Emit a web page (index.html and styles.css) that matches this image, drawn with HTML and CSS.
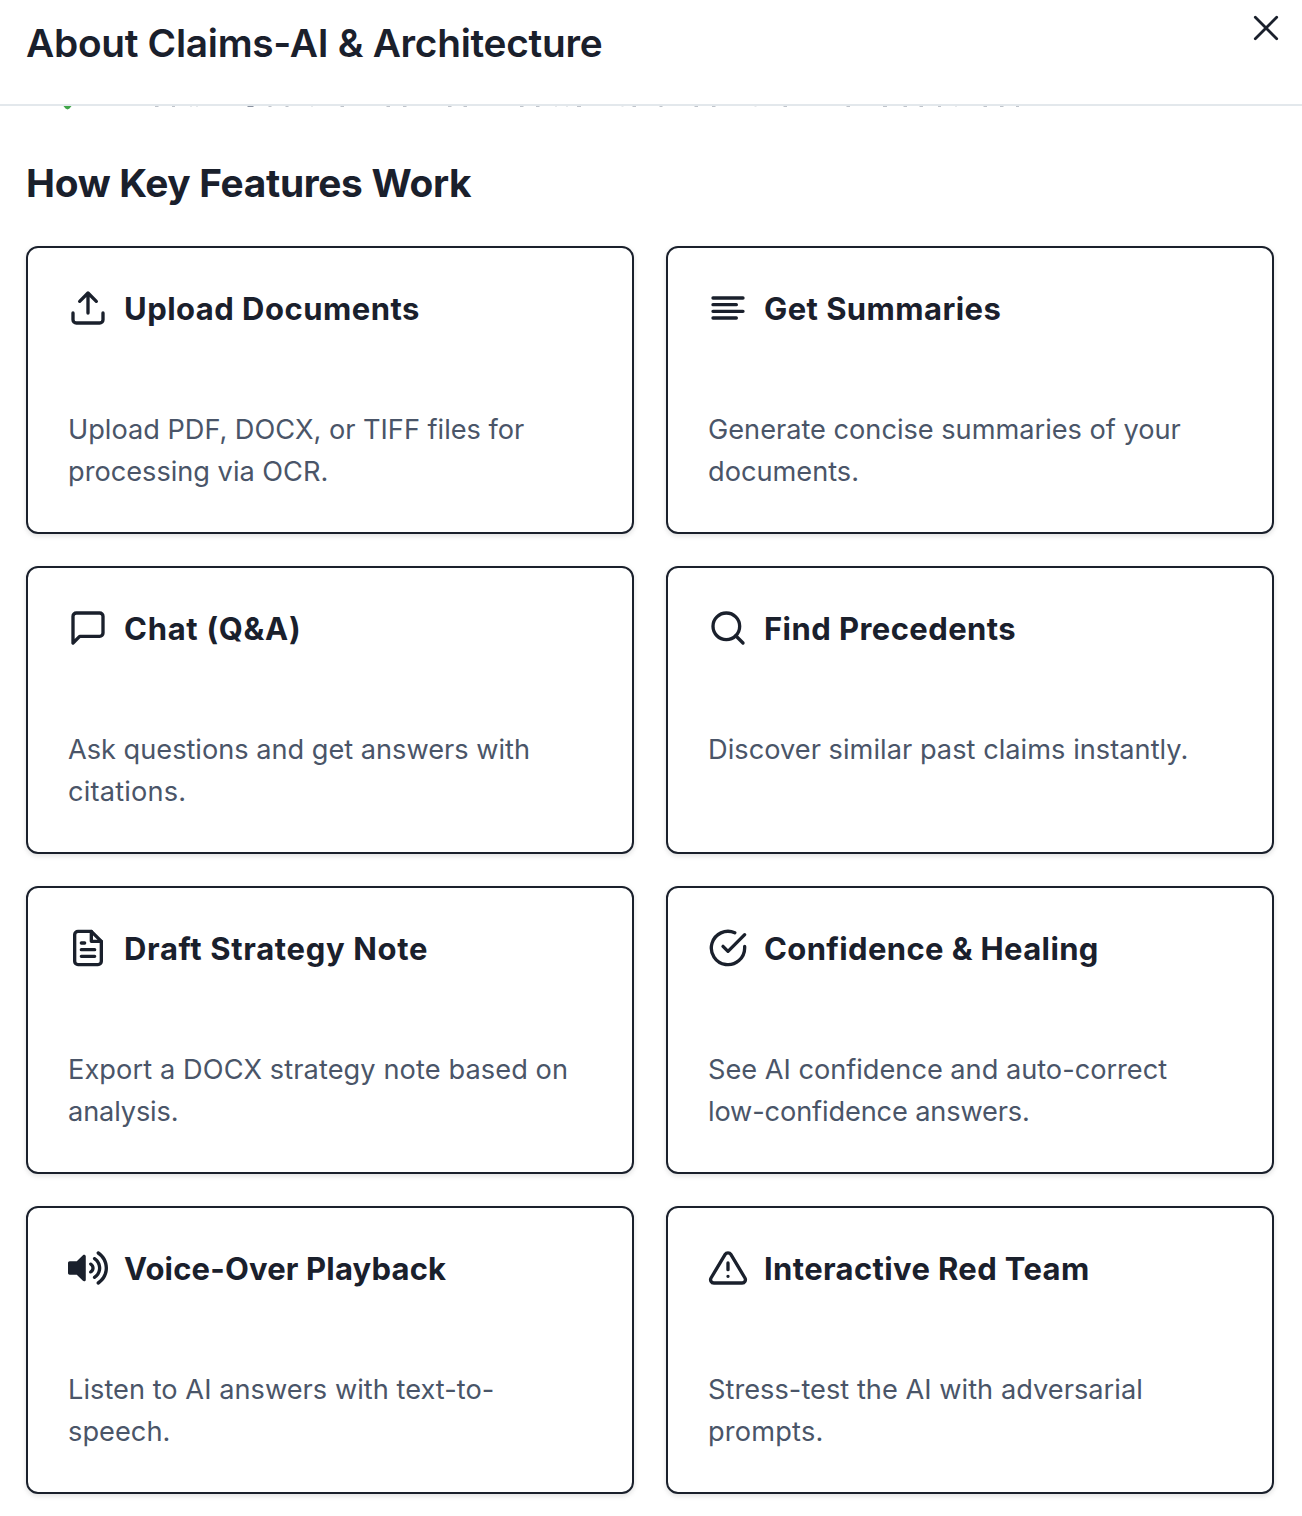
FILE: index.html
```
<!DOCTYPE html>
<html lang="en">
<head>
<meta charset="utf-8">
<title>About Claims-AI &amp; Architecture</title>
<link rel="stylesheet" href="styles.css">
</head>
<body>
<header class="header">
  <h1 class="title">About Claims-AI &amp; Architecture</h1>
  <button class="close" aria-label="Close"><svg viewBox="0 0 24 24" width="24" height="24"><path d="M1.3 1.3 22.7 22.7M22.7 1.3 1.3 22.7"/></svg></button>
</header>
<main class="content">
  <!-- bottom edge of the list row scrolled under the header -->
  <svg class="scrolled-row" width="1250" height="4" viewBox="26 106 1250 4" aria-hidden="true">
    <path fill="#3fa548" d="M63.5 106h8l-2 2.4-2 1.1-2-1.1z"/>
    <path stroke="#bfc4cb" stroke-width="1" d="M155 106.5h3.500M172 106.500h3M268.500 106.500h3M285.500 106.500h3M340.500 106.500h3.500M386.500 106.500h3.500M403 106.500h3.500M448 106.500h3.500M463.500 106.500h3.500M520 106.500h3.500M536 106.500h3.500M577 106.500h4M632.500 106.500h3.500M659.500 106.500h3M694.500 106.500h3.500M712 106.500h3.500M783.500 106.500h3.500M846.500 106.500h3.500M883 106.500h4M903.500 106.500h3.500M919.500 106.500h3.500M938 106.500h3M983.500 106.500h3.500M1000 106.500h3.500M1016 106.500h3"/>
    <path stroke="#8a92a0" stroke-width="1" d="M247.500 106.500h6"/>
    <path stroke="#e6e9ec" stroke-width="1" d="M190 106.500h2M196 106.500h2M311 106.500h2M555 106.500h2M566 106.500h2M621.500 106.500h2M754.500 106.500h2M955 106.500h2"/>
  </svg>
  <h2 class="section-title">How Key Features Work</h2>
  <div class="grid">
    <article class="card">
      <div class="card-head"><svg class="icon" viewBox="0 0 24 24"><path d="M21 15v4a2 2 0 0 1-2 2H5a2 2 0 0 1-2-2v-4"/><path d="M17 8l-5-5-5 5M12 3v12"/></svg><h3 class="name name-upload">Upload Documents</h3></div>
      <p class="text">Upload PDF, DOCX, or TIFF files for<br>processing via OCR.</p>
    </article>
    <article class="card">
      <div class="card-head"><svg class="icon" viewBox="0 0 24 24"><path d="M17 10H3M21 6H3M21 14H3M17 18H3"/></svg><h3 class="name">Get Summaries</h3></div>
      <p class="text">Generate concise summaries of your<br>documents.</p>
    </article>
    <article class="card">
      <div class="card-head"><svg class="icon" viewBox="0 0 24 24"><path d="M21 15a2 2 0 0 1-2 2H7l-4 4V5a2 2 0 0 1 2-2h14a2 2 0 0 1 2 2z"/></svg><h3 class="name name-chat">Chat (Q&amp;A)</h3></div>
      <p class="text">Ask questions and get answers with<br><span class="wide">citations.</span></p>
    </article>
    <article class="card">
      <div class="card-head"><svg class="icon" viewBox="0 0 24 24"><circle cx="11" cy="11" r="8"/><path d="M21 21l-4.350-4.350"/></svg><h3 class="name">Find Precedents</h3></div>
      <p class="text text-loose">Discover similar past claims instantly.</p>
    </article>
    <article class="card">
      <div class="card-head"><svg class="icon" viewBox="0 0 24 24"><path d="M14 2H6a2 2 0 0 0-2 2v16a2 2 0 0 0 2 2h12a2 2 0 0 0 2-2V8z"/><path d="M14 2v6h6M16 13H8M16 17H8M10 9H8"/></svg><h3 class="name name-draft">Draft Strategy Note</h3></div>
      <p class="text text-export">Export a DOCX strategy note based on<br><span class="tight">analysis.</span></p>
    </article>
    <article class="card">
      <div class="card-head"><svg class="icon" viewBox="0 0 24 24"><path d="M22 11.080V12a10 10 0 1 1-5.930-9.140"/><path d="M22 4L12 14.010l-3-3"/></svg><h3 class="name name-confidence">Confidence &amp; Healing</h3></div>
      <p class="text">See AI confidence and auto-correct<br><span class="tight">low-confidence answers.</span></p>
    </article>
    <article class="card">
      <div class="card-head"><svg class="icon icon-solid" viewBox="0 0 576 512"><path d="M215.030 71.050L126.060 160H24c-13.260 0-24 10.740-24 24v144c0 13.250 10.740 24 24 24h102.060l88.970 88.950c15.030 15.030 40.970 4.470 40.970-16.970V88.020c0-21.460-25.960-31.980-40.970-16.970zm233.320-51.120c-11.170-7.330-26.180-4.240-33.510 6.950-7.340 11.170-4.220 26.180 6.950 33.510 66.270 43.490 105.820 116.600 105.820 195.580 0 78.980-39.550 152.090-105.820 195.580-11.170 7.320-14.290 22.340-6.950 33.500 7.040 10.710 21.930 14.560 33.510 6.950C528.270 439.580 576 351.330 576 256S528.270 72.430 448.350 19.930zM480 256c0-63.530-32.060-121.940-85.770-156.240-11.190-7.140-26.030-3.820-33.120 7.460s-3.780 26.210 7.410 33.360C408.270 165.970 432 209.600 432 256s-23.730 90.020-63.480 115.420c-11.190 7.140-14.500 22.070-7.410 33.360 6.510 10.360 21.120 15.140 33.120 7.460C447.940 377.940 480 319.530 480 256zm-141.770-76.870c-11.580-6.330-26.190-2.160-32.610 9.450-6.390 11.610-2.160 26.200 9.450 32.610C327.980 228.280 336 241.630 336 256c0 14.380-8.020 27.720-20.920 34.810-11.610 6.410-15.840 21-9.450 32.610 6.430 11.660 21.050 15.800 32.610 9.450 28.230-15.550 45.770-45 45.770-76.880s-17.540-61.320-45.780-76.860z"/></svg><h3 class="name name-voice">Voice-Over Playback</h3></div>
      <p class="text text-loose">Listen to AI answers with text-to-<br>speech.</p>
    </article>
    <article class="card">
      <div class="card-head"><svg class="icon" viewBox="0 0 24 24"><path d="M10.290 3.860L1.820 18a2 2 0 0 0 1.710 3h16.940a2 2 0 0 0 1.710-3L13.710 3.860a2 2 0 0 0-3.420 0zM12 9v4M12 17h.01"/></svg><h3 class="name name-confidence">Interactive Red Team</h3></div>
      <p class="text text-loose">Stress-test the AI with adversarial<br><span class="wide">prompts.</span></p>
    </article>
  </div>
</main>
</body>
</html>
```
FILE: styles.css
```
* { box-sizing: border-box; margin: 0; padding: 0; }
body {
  background: #fff;
  color: #1a202c;
  font-family: Inter, "Liberation Sans", sans-serif;
  overflow: hidden;
}
.header {
  display: flex;
  justify-content: space-between;
  align-items: flex-start;
  height: 106px;
  padding: 16px 24px 0 26px;
  border-bottom: 2px solid #e3e8ec;
}
.title {
  margin-top: 3px;
  font-size: 38.8px;
  line-height: 48px;
  font-weight: 600;
  letter-spacing: -0.28px;
}
.close {
  width: 24px;
  height: 24px;
  border: 0;
  background: none;
}
.close svg {
  display: block;
  overflow: visible;
  fill: none;
  stroke: #1a202c;
  stroke-width: 2.8;
  stroke-linecap: round;
}
.content { padding: 0 28px 22px 26px; }
.scrolled-row { display: block; }
.section-title {
  margin-top: 49px;
  font-size: 38.8px;
  line-height: 48px;
  font-weight: 700;
  letter-spacing: -0.31px;
}
.grid {
  display: grid;
  grid-template-columns: 1fr 1fr;
  gap: 32px;
  margin-top: 39px;
}
.card {
  height: 288px;
  padding: 40px;
  border: 2px solid #1a202c;
  border-radius: 12px;
  box-shadow: 0 2px 6px rgba(0, 0, 0, 0.08), 0 2px 4px rgba(0, 0, 0, 0.05);
}
.card-head {
  display: flex;
  align-items: center;
  gap: 16px;
  height: 40px;
}
.icon {
  flex: none;
  width: 40px;
  height: 40px;
  fill: none;
  stroke: currentColor;
  stroke-width: 2;
  stroke-linecap: round;
  stroke-linejoin: round;
}
.icon-solid { fill: currentColor; stroke: none; }
.name {
  padding-top: 1px;
  font-size: 31px;
  line-height: 40px;
  font-weight: 700;
  letter-spacing: 0.43px;
  white-space: nowrap;
}
.name-upload { letter-spacing: 0.47px; }
.name-chat { letter-spacing: 0.7px; }
.name-draft { letter-spacing: 0.66px; }
.name-confidence { letter-spacing: 0.37px; }
.name-voice { letter-spacing: 0.17px; }
.text {
  margin-top: 81px;
  color: #4a5568;
  font-size: 27.2px;
  line-height: 42px;
  letter-spacing: -0.015px;
  white-space: nowrap;
}
.text-loose { letter-spacing: 0.03px; }
.text-export { letter-spacing: 0.09px; }
.tight { letter-spacing: -0.14px; }
.wide { letter-spacing: 0.18px; }
```
